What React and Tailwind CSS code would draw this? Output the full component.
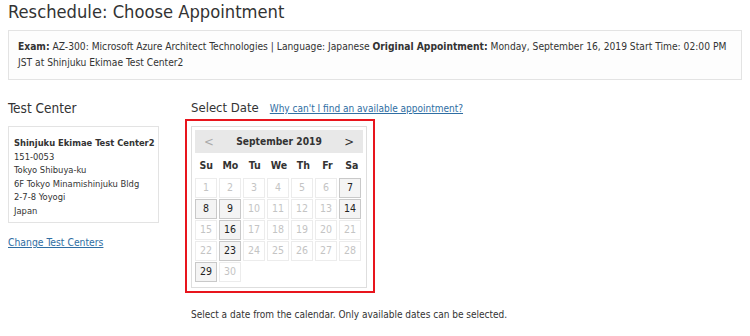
/* eslint-disable */

const font = { fontFamily: '"DejaVu Sans Condensed", "DejaVu Sans", sans-serif' };

const weeks = [
  [1, 2, 3, 4, 5, 6, 7],
  [8, 9, 10, 11, 12, 13, 14],
  [15, 16, 17, 18, 19, 20, 21],
  [22, 23, 24, 25, 26, 27, 28],
  [29, 30, null, null, null, null, null],
];

const available = [7, 8, 9, 14, 16, 23, 29];
const dayNames = ['Su', 'Mo', 'Tu', 'We', 'Th', 'Fr', 'Sa'];

function DayCell({ day }) {
  if (!day) return <div className="h-[20px] w-[22px]" />;
  const open = available.includes(day);
  return (
    <div
      className={
        open
          ? 'flex h-[20px] w-[22px] items-center justify-center border border-[#c9c9c9] bg-[#f4f4f4] text-[#222]'
          : 'flex h-[20px] w-[22px] items-center justify-center border border-[#ececec] bg-white text-[#c4c4c4]'
      }
    >
      {day}
    </div>
  );
}

function Calendar() {
  return (
    <div className="w-[176px] border border-[#dedede] bg-white p-[3px] pb-[5px] text-[10.5px]">
      <div className="flex h-[23px] items-center justify-between bg-[#e8e8e8] px-[9px]">
        <span className="text-[13px] text-[#aaa]">&lt;</span>
        <span className="text-[10.2px] font-bold text-[#333]">September 2019</span>
        <span className="text-[13px] text-[#333]">&gt;</span>
      </div>
      <div className="grid grid-cols-7 gap-x-[2px] pt-[5px] pb-[4px] text-[10.5px] font-bold text-[#333]">
        {dayNames.map((d) => (
          <div key={d} className="flex h-[16px] items-center justify-center">{d}</div>
        ))}
      </div>
      <div className="flex flex-col gap-y-[1px]">
        {weeks.map((week, i) => (
          <div key={i} className="flex gap-x-[2px]">
            {week.map((day, j) => (
              <DayCell key={j} day={day} />
            ))}
          </div>
        ))}
      </div>
    </div>
  );
}

export default function App() {
  return (
    <div className="h-[336px] w-[750px] bg-white px-[8px] text-[#333]" style={font}>
      <h1 className="text-[18.2px] leading-[24px] text-[#333]">Reschedule: Choose Appointment</h1>

      <div className="mt-[6px] h-[50px] w-[734px] border border-[#e3e3e3] bg-[#fdfdfd] px-[9px] pt-[8px] text-[10.2px] leading-[16px]">
        <div className="whitespace-nowrap">
          <b>Exam:</b> AZ-300: Microsoft Azure Architect Technologies | Language: Japanese <b>Original Appointment:</b>{' '}
          Monday, September 16, 2019 Start Time: 02:00 PM
        </div>
        <div>JST at Shinjuku Ekimae Test Center2</div>
      </div>

      <div className="mt-[18px] flex">
        <div className="w-[183px] shrink-0">
          <h2 className="h-[20px] text-[13.5px] leading-[20px]">Test Center</h2>
          <div className="mt-[8px] h-[97px] w-[151px] border border-[#e3e3e3] px-[5px] pt-[9px] text-[9.3px] leading-[13.5px]">
            <div className="whitespace-nowrap font-bold">Shinjuku Ekimae Test Center2</div>
            <div>151-0053</div>
            <div>Tokyo Shibuya-ku</div>
            <div>6F Tokyo Minamishinjuku Bldg</div>
            <div>2-7-8 Yoyogi</div>
            <div>Japan</div>
          </div>
          <a href="#" className="mt-[12px] block text-[10.3px] leading-[14px] text-[#2f6ea3] underline">
            Change Test Centers
          </a>
        </div>

        <div className="flex-1">
          <div className="flex h-[20px] items-baseline gap-[11px]">
            <h2 className="text-[13px] leading-[20px]">Select Date</h2>
            <a href="#" className="text-[10px] leading-[20px] text-[#2f6ea3] underline">
              Why can't I find an available appointment?
            </a>
          </div>
          <div className="-ml-[6px] mt-[1px] w-[190px] border-2 border-[#e8151d] pt-[5px] pb-[3px] pl-[4px]">
            <Calendar />
          </div>
          <p className="mt-[15px] text-[10px] leading-[14px]">
            Select a date from the calendar. Only available dates can be selected.
          </p>
        </div>
      </div>
    </div>
  );
}
